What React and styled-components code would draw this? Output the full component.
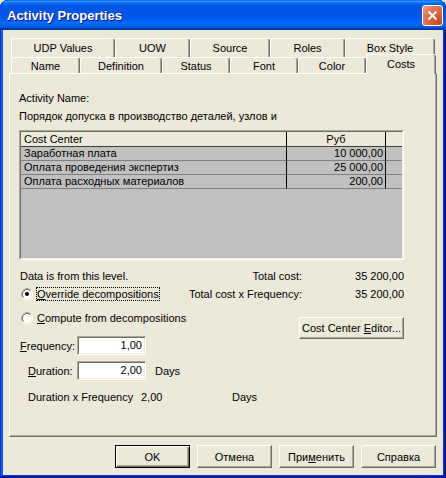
import React from 'react';
import styled, { createGlobalStyle } from 'styled-components';

const Global = createGlobalStyle`
  html, body { margin: 0; padding: 0; background: #ECE9D8; }
  body { font-family: "Liberation Sans", Arial, sans-serif; font-size: 11px; color: #000; }
  * { box-sizing: border-box; }
`;

const Window = styled.div`
  width: 446px;
  height: 478px;
  display: flex;
  flex-direction: column;
  padding-bottom: 3px;
  background: #0831d9;
  border-radius: 8px 8px 0 0;
  overflow: hidden;
  box-shadow: inset -1px -1px #00138c, inset 1px 1px #0831d9, inset -2px -2px #001ea0,
    inset 2px 2px #166aee, inset -3px -3px #003bda, inset 3px 3px #0855dd;
`;

const TitleBar = styled.div`
  height: 30px;
  flex: none;
  display: flex;
  align-items: center;
  justify-content: space-between;
  padding: 0 3px 0 7px;
  border-radius: 8px 8px 0 0;
  background: linear-gradient(180deg, #0058ee 0%, #3a93ff 4%, #288eff 6%, #127dff 8%, #036ffc 10%,
    #0262ee 14%, #0057e5 20%, #0054e3 24%, #0055eb 56%, #005bf5 66%, #026afe 76%,
    #0062ef 86%, #0052d6 92%, #0040ab 94%, #003092 100%);
`;

const Title = styled.div`
  color: #fff;
  font-family: "Liberation Sans", Arial, sans-serif;
  font-weight: bold;
  font-size: 13px;
  text-shadow: 1px 1px 0 #0a1883;
  margin-top: 1px;
`;

const CloseButton = styled.div`
  width: 21px;
  height: 21px;
  border: 1px solid #fff;
  border-radius: 3px;
  display: flex;
  align-items: center;
  justify-content: center;
  background: radial-gradient(circle at 85% 85%, #cc4614 0%, #dc6540 45%, #e37a5b 70%, #f0a088 100%);
`;

const Client = styled.div`
  flex: 1;
  margin: 0 3px;
  background: #ECE9D8;
  display: flex;
  flex-direction: column;
  padding: 8px 6px 7px 6px;
`;

const TabStrip = styled.div`
  display: flex;
  flex-direction: column;
  padding-left: 2px;
  flex: none;
`;

const TabRow = styled.div`
  display: flex;
  align-items: flex-end;
  height: ${p => p.$h}px;
`;

const Tab = styled.div`
  width: ${p => p.$w}px;
  height: ${p => (p.$active ? 20 : p.$h)}px;
  margin-bottom: ${p => (p.$active ? -1 : 0)}px;
  position: ${p => (p.$active ? 'relative' : 'static')};
  z-index: ${p => (p.$active ? 2 : 'auto')};
  display: flex;
  align-items: center;
  justify-content: center;
  padding-bottom: ${p => (p.$active ? 2 : 0)}px;
  background: #ECE9D8;
  border-top: 1px solid #fff;
  border-left: 1px solid #fff;
  border-right: 1px solid #716f64;
  box-shadow: inset -1px 0 #aca899;
  border-radius: 3px 3px 0 0;
  white-space: nowrap;
`;

const Panel = styled.div`
  flex: 1;
  border-top: 1px solid #fff;
  border-left: 1px solid #fff;
  border-right: 1px solid #716f64;
  border-bottom: 1px solid #716f64;
  box-shadow: inset -1px -1px #aca899;
  padding: 18px 32px 0 9px;
  display: flex;
  flex-direction: column;
`;

const Line = styled.div`
  line-height: 13px;
  height: 13px;
  margin-top: ${p => p.$mt || 0}px;
  white-space: nowrap;
`;

const GridFrame = styled.div`
  margin-top: 7px;
  height: 130px;
  border: 1px solid;
  border-color: #aca899 #fff #fff #aca899;
  display: flex;
`;

const GridInner = styled.div`
  flex: 1;
  border: 1px solid;
  border-color: #716f64 #f1efe2 #f1efe2 #716f64;
  background: #c0c0c0;
  display: grid;
  grid-template-columns: 266px 99px 1fr;
  grid-auto-rows: 14px;
  grid-template-rows: 15px;
  align-content: start;
`;

const HeadCell = styled.div`
  background: #ECE9D8;
  border-bottom: 1px solid #404040;
  border-right: ${p => (p.$last ? 'none' : '1px solid #000')};
  line-height: 14px;
  padding: 0 3px;
  text-align: ${p => p.$align || 'left'};
  white-space: nowrap;
`;

const Cell = styled.div`
  border-bottom: 1px solid #808080;
  border-right: ${p => (p.$last ? 'none' : '1px solid #000')};
  line-height: 13px;
  padding: 0 ${p => (p.$align === 'right' ? 2 : 3)}px 0 3px;
  text-align: ${p => p.$align || 'left'};
  white-space: nowrap;
`;

const Lower = styled.div`
  display: flex;
  margin-top: 9px;
`;

const LeftCol = styled.div`
  flex: 1 1 0;
  min-width: 0;
  display: flex;
  flex-direction: column;
`;

const Text = styled.div`
  height: 14px;
  line-height: 14px;
  padding-left: 1px;
  white-space: nowrap;
`;

const RadioRow = styled.div`
  display: flex;
  align-items: center;
  height: 14px;
  margin-top: ${p => p.$mt}px;
  padding-left: 2px;
`;

const RadioLabel = styled.span`
  margin-left: 3px;
  padding: 0;
  line-height: 12px;
  border: 1px dotted ${p => (p.$focus ? '#000' : 'transparent')};
  white-space: nowrap;
`;

const FieldRow = styled.div`
  display: flex;
  align-items: center;
  margin-top: ${p => p.$mt}px;
  height: 19px;
`;

const FieldLabel = styled.span`
  flex: none;
  width: 58px;
  padding-left: ${p => p.$indent}px;
  white-space: nowrap;
`;

const Input = styled.div`
  flex: none;
  width: 69px;
  height: 19px;
  border: 1px solid;
  border-color: #aca899 #fff #fff #aca899;
  box-shadow: inset 1px 1px #716f64, inset -1px -1px #f1efe2;
  background: #fff;
  text-align: right;
  padding-right: 3px;
  line-height: 17px;
`;

const Unit = styled.span`
  margin-left: 9px;
`;

const ProductRow = styled.div`
  display: flex;
  margin-top: 10px;
  height: 14px;
  line-height: 14px;
  padding-left: 9px;
`;

const ProductPart = styled.span`
  flex: none;
  width: ${p => (p.$w ? `${p.$w}px` : 'auto')};
  white-space: nowrap;
`;

const Totals = styled.div`
  flex: none;
  width: 216px;
  display: grid;
  grid-template-columns: 114px 102px;
  grid-template-rows: 14px 14px auto;
  row-gap: 4px;
  align-content: start;
`;

const TotalLabel = styled.div`
  text-align: right;
  line-height: 14px;
  white-space: nowrap;
`;

const TotalValue = styled.div`
  text-align: right;
  line-height: 14px;
`;

const Button = styled.div`
  width: ${p => p.$w || 75}px;
  height: ${p => p.$h || 23}px;
  display: flex;
  align-items: center;
  justify-content: center;
  background: #ECE9D8;
  white-space: nowrap;
  border: 1px solid;
  border-color: ${p => (p.$default ? '#000' : '#fff #716f64 #716f64 #fff')};
  box-shadow: ${p =>
    p.$default
      ? 'inset 1px 1px #fff, inset -1px -1px #716f64, inset -2px -2px #aca899'
      : 'inset -1px -1px #aca899'};
`;

const ButtonText = styled.span`
  white-space: pre;
`;

const EditorButton = styled(Button)`
  grid-column: 1 / -1;
  justify-self: end;
  margin-top: 12px;
`;

const ButtonRow = styled.div`
  display: flex;
  justify-content: flex-end;
  gap: 7px;
  margin-top: 8px;
  padding-right: 1px;
  flex: none;
`;

const RadioIcon = ({ checked }) => (
  <svg width="12" height="12" viewBox="0 0 12 12" style={{ flex: 'none' }}>
    <circle cx="6" cy="6" r="5" fill="#fff" />
    <path d="M2.11 9.89 A5.5 5.5 0 0 1 9.89 2.11" stroke="#aca899" fill="none" />
    <path d="M9.89 2.11 A5.5 5.5 0 0 1 2.11 9.89" stroke="#fff" fill="none" />
    <path d="M2.82 9.18 A4.5 4.5 0 0 1 9.18 2.82" stroke="#716f64" fill="none" />
    <path d="M9.18 2.82 A4.5 4.5 0 0 1 2.82 9.18" stroke="#f1efe2" fill="none" />
    {checked && <circle cx="6" cy="6" r="2" fill="#000" />}
  </svg>
);

const topTabs = [
  ['UDP Values', 104],
  ['UOW', 75],
  ['Source', 80],
  ['Roles', 75],
  ['Box Style', 90],
];
const bottomTabs = [
  ['Name', 69],
  ['Definition', 82],
  ['Status', 68],
  ['Font', 68],
  ['Color', 68],
  ['Costs', 70, true],
];

const rows = [
  ['Заработная плата', '10 000,00'],
  ['Оплата проведения экспертиз', '25 000,00'],
  ['Оплата расходных материалов', '200,00'],
];

export default function App() {
  return (
    <>
      <Global />
      <Window>
        <TitleBar>
          <Title>Activity Properties</Title>
          <CloseButton>
            <svg width="11" height="11" viewBox="0 0 11 11">
              <path d="M1.5 1.5 L9.5 9.5 M9.5 1.5 L1.5 9.5" stroke="#fff" strokeWidth="2" />
            </svg>
          </CloseButton>
        </TitleBar>
        <Client>
          <TabStrip>
            <TabRow $h={19}>
              {topTabs.map(([t, w]) => (
                <Tab key={t} $w={w} $h={19}>{t}</Tab>
              ))}
            </TabRow>
            <TabRow $h={16}>
              {bottomTabs.map(([t, w, a]) => (
                <Tab key={t} $w={w} $h={16} $active={a}>{t}</Tab>
              ))}
            </TabRow>
          </TabStrip>
          <Panel>
            <Line>Activity Name:</Line>
            <Line $mt={5}>Порядок допуска в производство деталей, узлов и</Line>
            <GridFrame>
              <GridInner>
                <HeadCell>Cost Center</HeadCell>
                <HeadCell $align="center">Руб</HeadCell>
                <HeadCell $last />
                {rows.map(([n, v]) => (
                  <React.Fragment key={n}>
                    <Cell>{n}</Cell>
                    <Cell $align="right">{v}</Cell>
                    <Cell $last />
                  </React.Fragment>
                ))}
              </GridInner>
            </GridFrame>
            <Lower>
              <LeftCol>
                <Text>Data is from this level.</Text>
                <RadioRow $mt={4}>
                  <RadioIcon checked />
                  <RadioLabel $focus><u>O</u>verride decompositions</RadioLabel>
                </RadioRow>
                <RadioRow $mt={10}>
                  <RadioIcon />
                  <RadioLabel><u>C</u>ompute from decompositions</RadioLabel>
                </RadioRow>
                <FieldRow $mt={11}>
                  <FieldLabel $indent={1}><u>F</u>requency:</FieldLabel>
                  <Input>1,00</Input>
                </FieldRow>
                <FieldRow $mt={6}>
                  <FieldLabel $indent={9}><u>D</u>uration:</FieldLabel>
                  <Input>2,00</Input>
                  <Unit>Days</Unit>
                </FieldRow>
                <ProductRow>
                  <ProductPart $w={113}>Duration x Frequency</ProductPart>
                  <ProductPart $w={91}>2,00</ProductPart>
                  <ProductPart>Days</ProductPart>
                </ProductRow>
              </LeftCol>
              <Totals>
                <TotalLabel>Total cost:</TotalLabel>
                <TotalValue>35 200,00</TotalValue>
                <TotalLabel>Total cost x Frequency:</TotalLabel>
                <TotalValue>35 200,00</TotalValue>
                <EditorButton $w={105} $h={22}>
                  <ButtonText>Cost Center <u>E</u>ditor...</ButtonText>
                </EditorButton>
              </Totals>
            </Lower>
          </Panel>
          <ButtonRow>
            <Button $default><ButtonText>OK</ButtonText></Button>
            <Button><ButtonText>Отмена</ButtonText></Button>
            <Button><ButtonText>При<u>м</u>енить</ButtonText></Button>
            <Button><ButtonText>Справка</ButtonText></Button>
          </ButtonRow>
        </Client>
      </Window>
    </>
  );
}
